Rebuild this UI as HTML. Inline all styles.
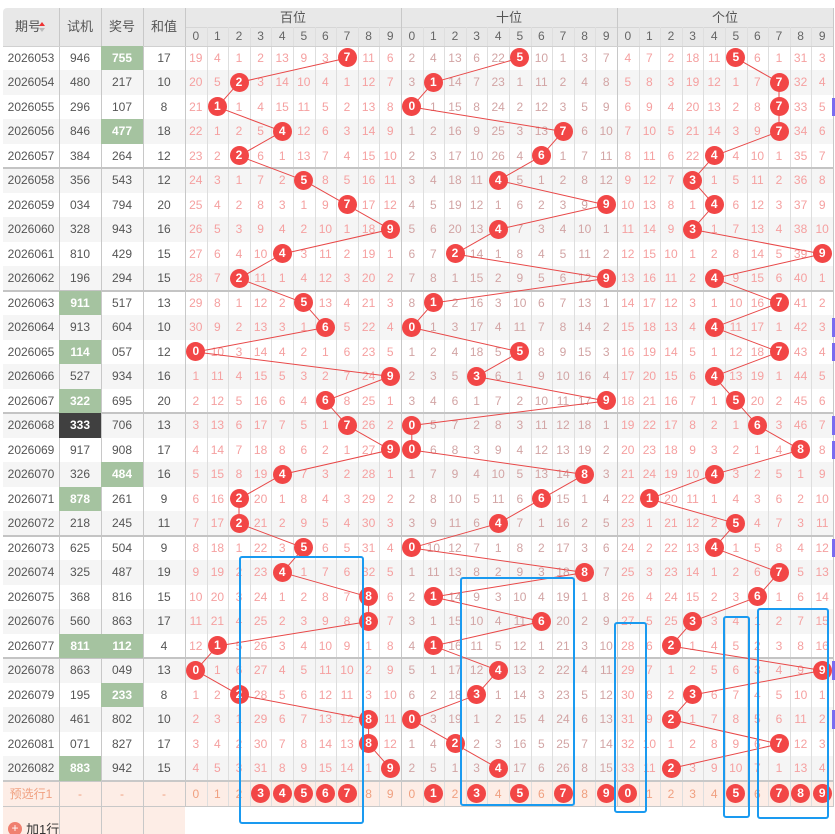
<!DOCTYPE html>
<html><head><meta charset="utf-8">
<style>
html,body{margin:0;padding:0;background:#fff;width:835px;height:834px;overflow:hidden;font-family:"Liberation Sans","Noto Sans CJK SC",sans-serif;}
#c{position:relative;width:835px;height:834px;}
.a{position:absolute;box-sizing:border-box;}
.t{position:absolute;text-align:center;font-size:12px;white-space:nowrap;}
.ball{position:absolute;width:19px;height:19px;border-radius:50%;background:#f24646;color:#fff;font-weight:bold;font-size:12px;text-align:center;line-height:19px;}
</style></head><body><div id="c"><svg id="sv" width="835" height="834" style="position:absolute;left:0;top:0;z-index:3;pointer-events:none"></svg></div>
<script>
var C=document.getElementById('c'),SV=document.getElementById('sv');
function box(x,y,w,h,st,z){var d=document.createElement('div');d.className='a';d.style.cssText='left:'+x+'px;top:'+y+'px;width:'+w+'px;height:'+h+'px;'+(st||'')+(z!=null?';z-index:'+z:'');C.appendChild(d);return d;}
function txt(x,y,w,h,s,st,z){var d=document.createElement('div');d.className='t';d.style.cssText='left:'+x+'px;top:'+y+'px;width:'+w+'px;height:'+h+'px;line-height:'+h+'px;'+(st||'')+(z!=null?';z-index:'+z:'');d.textContent=s;C.appendChild(d);return d;}
function ball(cx,cy,s,z){var d=document.createElement('div');d.className='ball';d.style.left=(cx-9.5)+'px';d.style.top=(cy-9.5)+'px';d.style.zIndex=z||5;d.textContent=s;C.appendChild(d);}
function line(x1,y1,x2,y2,col,w){var l=document.createElementNS('http://www.w3.org/2000/svg','line');l.setAttribute('x1',x1);l.setAttribute('y1',y1);l.setAttribute('x2',x2);l.setAttribute('y2',y2);l.setAttribute('stroke',col);l.setAttribute('stroke-width',w||1);SV.appendChild(l);}
var periods=[],draws="755 217 107 477 264 543 794 943 429 294 517 604 057 934 695 706 908 484 261 245 504 487 816 863 112 049 233 802 827 942".split(' ');
var tests="946 480 296 846 384 356 034 328 810 196 911 913 114 527 322 333 917 326 878 218 625 325 368 560 811 863 195 461 071 883".split(' ');
var sums=[17,10,8,18,12,12,20,16,15,15,13,10,12,16,20,13,17,16,9,11,9,19,15,17,4,13,8,10,17,15];
for(var i=0;i<30;i++)periods.push(''+(2026053+i));
var greenD={0:1,3:1,17:1,24:1,26:1},greenT={10:1,12:1,14:1,18:1,24:1,29:1};
var XS=[3,59,101,143,185],DW=21.6,R0=45.7,RH=24.5;
var N=30;
box(3,8,830,37.7,'background:#e8e8e8;border-radius:4px 0 0 0');
var heads=['期号','试机','奖号','和值'];
txt(3,8,50,37,'期号','color:#555;font-size:13px');
for(var k=1;k<4;k++){txt(XS[k],8,XS[k+1]-XS[k],37,heads[k],'color:#555;font-size:13px');}
box(39,22,0,0,'border-left:3.5px solid transparent;border-right:3.5px solid transparent;border-bottom:4px solid #e33;');
box(39,28,0,0,'border-left:3.5px solid transparent;border-right:3.5px solid transparent;border-top:4px solid #bbb;');
var grp=['百位','十位','个位'];
for(var g=0;g<3;g++){var gx=185+g*10*DW;txt(gx,8,10*DW,19,grp[g],'color:#555;font-size:13px');
 for(var d=0;d<10;d++)txt(gx+d*DW,27,DW,18,''+d,'color:#666;font-size:12px');}
box(185,27,648,1,'background:#d6d6d6');
for(var r=0;r<N;r++){var y=R0+r*RH;box(3,y,830,RH,'background:'+(r%2?'#f5f5f5':'#fff'));}
var FY=R0+N*RH, FH=26;
box(3,FY,830,FH,'background:#fdede6');
box(3,FY+FH,182,834-FY-FH,'background:#fdede6');
for(var k=1;k<4;k++)box(XS[k],8,1,834-8,'background:#c8c8c8');
box(185,8,1,FY+FH-8,'background:#c8c8c8');
for(var g=0;g<3;g++)for(var d=1;d<=10;d++){var x=185+g*10*DW+d*DW;box(Math.round(x),(d==10?8:27),1,FY+FH-(d==10?8:27),'background:'+(d==10?'#c8c8c8':'#dedede'));}
box(3,R0,830,1,'background:#d0d0d0');
for(var r=5;r<N;r+=5)box(3,R0+r*RH-1,830,2,'background:#c4c4c4');
box(3,FY-1,830,2,'background:#c8c8c8');
box(3,FY+FH-1,830,1,'background:#c8c8c8');
for(var r=0;r<N;r++){var y=R0+r*RH;
 txt(3,y,56,RH,periods[r],'color:#555;font-size:12px');
 if(greenT[r])box(59,y,42,RH,'background:#a5c3a0');
 if(r==15)box(59,y,42,RH,'background:#404040');
 txt(59,y,42,RH,tests[r],'color:'+(greenT[r]||r==15?'#fff;font-weight:bold':'#555')+';font-size:12px');
 if(greenD[r])box(101,y,42,RH,'background:#a5c3a0');
 txt(101,y,42,RH,draws[r],'color:'+(greenD[r]?'#fff;font-weight:bold':'#555')+';font-size:12px');
 txt(143,y,42,RH,''+sums[r],'color:#555;font-size:12px');
}
var init=[[19,4,1,2,13,9,3,0,11,6],[2,4,13,6,22,0,10,1,3,7],[4,7,2,18,11,0,6,1,31,3]];
var cols=['#f5a0a0','#d2a4a4','#f5a0a0'];
for(var g=0;g<3;g++){var om=init[g].slice();var prev=null;
 for(var r=0;r<N;r++){var dg=+draws[r][g];
  if(r>0)for(var d=0;d<10;d++)om[d]=(d==dg)?0:om[d]+1;
  var y=R0+r*RH,gx=185+g*10*DW;
  for(var d=0;d<10;d++){if(d==dg)continue;txt(gx+d*DW,y,DW,RH,''+om[d],'color:'+cols[g]+';font-size:12px',2);}
  var cx=gx+dg*DW+DW/2,cy=y+RH/2;ball(cx,cy,''+dg);
  if(prev)line(prev[0],prev[1],cx,cy,'#e84848',1);prev=[cx,cy];
 }}
txt(3,FY,56,FH,'预选行1','color:#f0a080;font-size:12px');
for(var k=1;k<4;k++)txt(XS[k],FY,XS[k+1]-XS[k],FH,'-','color:#f0a080');
var sel=[[3,4,5,6,7],[1,3,5,7,9],[0,5,7,8,9]];
for(var g=0;g<3;g++)for(var d=0;d<10;d++){var gx=185+g*10*DW;
 if(sel[g].indexOf(d)>=0)ball(gx+d*DW+DW/2,FY+FH/2,''+d);else txt(gx+d*DW,FY,DW,FH,''+d,'color:#f0a080;font-size:12px',2);}
box(8,822,14,14,'background:#f08070;border-radius:50%');
txt(8,822,14,14,'+','color:#fff;font-size:12px;line-height:13px');
txt(26,818,30,24,'加1行','color:#333;font-size:13px');
for(var k=1;k<4;k++)txt(XS[k],826,XS[k+1]-XS[k],16,'-','color:#555');
[2,11,12,15,16,20,25,27].forEach(function(r){box(832,R0+r*RH+3,3,RH-6,'background:#7a6cf0',6);});
[[239,556,125,268],[460,577,115,229],[614,622,33,191],[723,616,27,202],[757,608,72,211]].forEach(function(b){box(b[0],b[1],b[2],b[3],'border:2.5px solid #1a9af0;border-radius:3px',8);});
</script></body></html>
